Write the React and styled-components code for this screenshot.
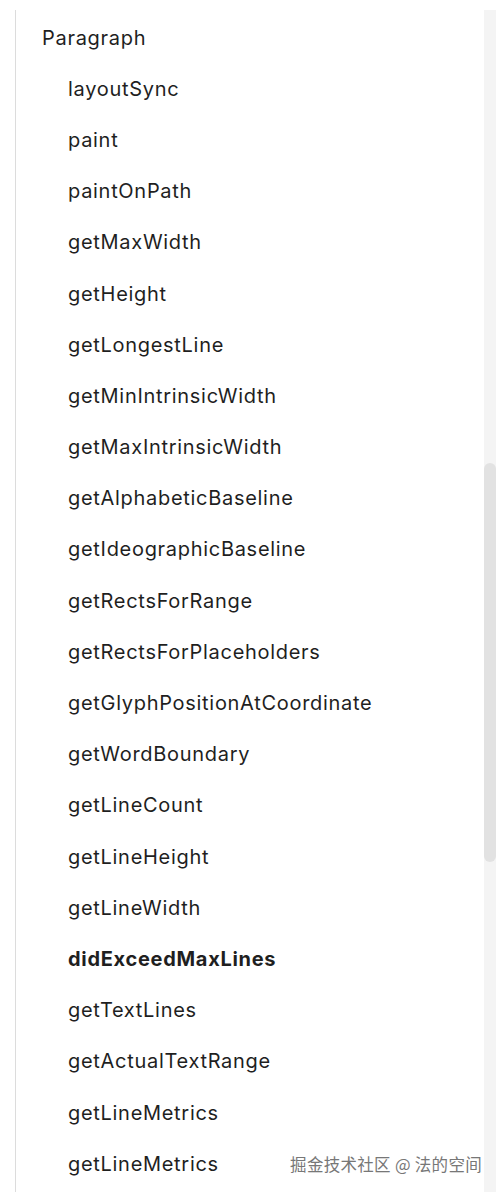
import React from "react";
import styled, { createGlobalStyle } from "styled-components";

const Global = createGlobalStyle`
  html, body { margin: 0; padding: 0; background: #ffffff; }
  body { width: 500px; height: 1192px; overflow: hidden; font-family: Inter, "Noto Sans", "Liberation Sans", sans-serif; }
`;

const Page = styled.div`
  position: relative;
  width: 500px;
  height: 1192px;
  display: flex;
  padding-top: 10px;
  box-sizing: border-box;
  overflow: hidden;
`;

const Panel = styled.div`
  margin-left: 15px;
  flex: 1;
  border-left: 1px solid #dcdcdc;
  overflow: hidden;
`;

const List = styled.ul`
  list-style: none;
  margin: 0;
  padding: 2px 0 0 0;
`;

const Item = styled.li`
  height: 51.2px;
  display: flex;
  align-items: center;
  padding-left: ${(p) => (p.$level === 0 ? 26 : 52)}px;
  font-size: 20px;
  letter-spacing: 0.7px;
  color: #1f1f1f;
  font-weight: ${(p) => (p.$bold ? 700 : 400)};
  white-space: nowrap;
`;

const Track = styled.div`
  width: 12px;
  margin-right: 4px;
  background: #f4f4f4;
  display: flex;
  flex-direction: column;
`;

const Thumb = styled.div`
  margin-top: 453px;
  height: 399px;
  border-radius: 6px;
  background: #e2e2e2;
`;

const Watermark = styled.div`
  position: absolute;
  right: 18px;
  bottom: 16px;
  font-family: "Noto Sans CJK SC", "Noto Sans", sans-serif;
  font-size: 16.5px;
  color: #777777;
  letter-spacing: 0.3px;
  text-shadow: 0 0 1px rgba(255, 255, 255, 0.9);
`;

const items = [
  "layoutSync",
  "paint",
  "paintOnPath",
  "getMaxWidth",
  "getHeight",
  "getLongestLine",
  "getMinIntrinsicWidth",
  "getMaxIntrinsicWidth",
  "getAlphabeticBaseline",
  "getIdeographicBaseline",
  "getRectsForRange",
  "getRectsForPlaceholders",
  "getGlyphPositionAtCoordinate",
  "getWordBoundary",
  "getLineCount",
  "getLineHeight",
  "getLineWidth",
  "didExceedMaxLines",
  "getTextLines",
  "getActualTextRange",
  "getLineMetrics",
  "getLineMetrics",
];

export default function App() {
  return (
    <Page>
      <Global />
      <Panel>
        <List>
          <Item $level={0}>Paragraph</Item>
          {items.map((t, i) => (
            <Item key={i} $level={1} $bold={t === "didExceedMaxLines"}>
              {t}
            </Item>
          ))}
        </List>
      </Panel>
      <Track>
        <Thumb />
      </Track>
      <Watermark>掘金技术社区 @ 法的空间</Watermark>
    </Page>
  );
}
